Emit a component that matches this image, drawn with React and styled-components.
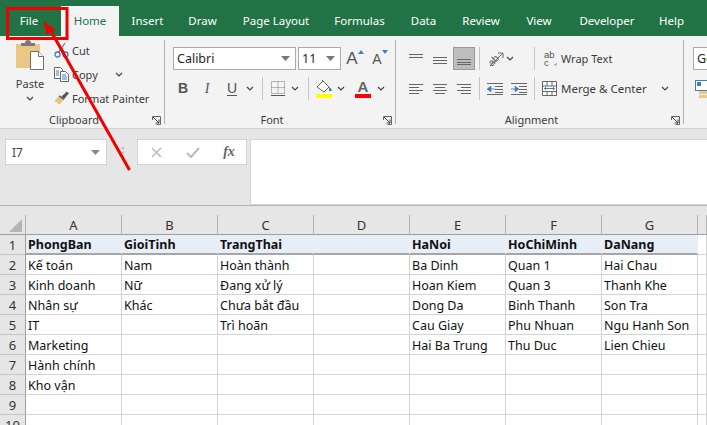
import React from 'react'
import styled, { createGlobalStyle } from 'styled-components'

const GlobalStyle = createGlobalStyle`
  html, body { margin: 0; padding: 0; background: #e6e6e6; overflow: hidden; }
  body { font-family: "Noto Sans", "Open Sans", sans-serif; }
`

const tabs = [
  ['Insert', 57],
  ['Draw', 53],
  ['Page Layout', 94],
  ['Formulas', 73],
  ['Data', 55],
  ['Review', 60],
  ['View', 56],
  ['Developer', 80],
  ['Help', 49],
]
const columns = ['A', 'B', 'C', 'D', 'E', 'F', 'G']
const sheet = [
  ['PhongBan', 'GioiTinh', 'TrangThai', '', 'HaNoi', 'HoChiMinh', 'DaNang'],
  ['Kế toán', 'Nam', 'Hoàn thành', '', 'Ba Dinh', 'Quan 1', 'Hai Chau'],
  ['Kinh doanh', 'Nữ', 'Đang xử lý', '', 'Hoan Kiem', 'Quan 3', 'Thanh Khe'],
  ['Nhân sự', 'Khác', 'Chưa bắt đầu', '', 'Dong Da', 'Binh Thanh', 'Son Tra'],
  ['IT', '', 'Trì hoãn', '', 'Cau Giay', 'Phu Nhuan', 'Ngu Hanh Son'],
  ['Marketing', '', '', '', 'Hai Ba Trung', 'Thu Duc', 'Lien Chieu'],
  ['Hành chính', '', '', '', '', '', ''],
  ['Kho vận', '', '', '', '', '', ''],
  ['', '', '', '', '', '', ''],
  ['', '', '', '', '', '', ''],
]

const Page = styled.div`
  position: relative;
  width: 707px;
  height: 425px;
  overflow: hidden;
  background: #e6e6e6;
`

const TitleBar = styled.div`
  display: flex;
  align-items: flex-end;
  height: 36px;
  padding-left: 7px;
  background: #217346;
`

const Tab = styled.div`
  display: flex;
  align-items: center;
  justify-content: center;
  flex: none;
  width: ${(p) => p.$w}px;
  height: 30px;
  margin-right: ${(p) => p.$gap || 0}px;
  padding-bottom: 1px;
  box-sizing: border-box;
  font-size: 11.5px;
  white-space: nowrap;
  color: ${(p) => (p.$active ? '#217346' : '#ffffff')};
  background: ${(p) => (p.$active ? '#f3f3f3' : 'transparent')};
`

const Ribbon = styled.div`
  display: flex;
  height: 93px;
  box-sizing: border-box;
  background: #f3f3f3;
  border-bottom: 1px solid #d2d2d2;
`

const Group = styled.div`
  display: flex;
  flex-direction: column;
  width: ${(p) => p.$w}px;
  flex: none;
  box-sizing: border-box;
  margin: 4px 0;
  height: 84px;
  border-right: ${(p) => (p.$last ? 'none' : '1px solid #b1b1b1')};
`

const GroupBody = styled.div`
  flex: 1;
  display: flex;
  padding: ${(p) => p.$pt ?? 7}px 0 0 ${(p) => p.$pl || 0}px;
  min-height: 0;
`

const GroupFooter = styled.div`
  display: flex;
  align-items: center;
  height: 16px;
  margin-bottom: -4px;
`

const GroupLabel = styled.div`
  flex: 1;
  text-align: center;
  font-size: 11px;
  line-height: 16px;
  color: #3b3b3b;
`

const Launcher = styled.div`
  width: 16px;
  display: flex;
  justify-content: center;
`

const Column = styled.div`
  display: flex;
  flex-direction: column;
  gap: ${(p) => p.$gap || 0}px;
`

const ClipboardList = styled(Column)`
  margin-top: -2px;
`

const Row = styled.div`
  display: flex;
  align-items: center;
  height: ${(p) => p.$h || 23}px;
`

const PasteButton = styled.div`
  width: 54px;
  padding-left: 3px;
  margin-right: -3px;
  display: flex;
  flex-direction: column;
  align-items: center;
  font-size: 11px;
  color: #3b3b3b;
  line-height: 15px;
`

const PasteLabel = styled.span`
  margin-top: 6px;
  margin-bottom: 5px;
`

const ClipboardItem = styled.div`
  display: flex;
  align-items: center;
  gap: 3px;
  height: 24px;
  font-size: 11px;
  color: #3b3b3b;
  white-space: nowrap;
`

const Slot = styled.div`
  display: flex;
  align-items: center;
  justify-content: center;
  flex: none;
  width: ${(p) => p.$w}px;
  margin-left: ${(p) => p.$ml || 0}px;
`

const Sep = styled.div`
  flex: none;
  width: 1px;
  align-self: stretch;
  margin-left: ${(p) => p.$ml || 0}px;
  background: #c6c6c6;
`

const ComboBox = styled.div`
  display: flex;
  align-items: center;
  justify-content: space-between;
  box-sizing: border-box;
  flex: none;
  width: ${(p) => p.$w}px;
  height: 23px;
  margin-right: ${(p) => p.$mr || 0}px;
  padding: 0 ${(p) => p.$pr || 0}px 0 3px;
  background: #fff;
  border: 1px solid #ababab;
  font-size: 12.5px;
  color: #262626;
  overflow: hidden;
  white-space: nowrap;
`

const ActiveBox = styled.div`
  display: flex;
  align-items: center;
  justify-content: center;
  flex: none;
  box-sizing: border-box;
  width: 22px;
  height: 23px;
  margin-left: 1px;
  background: #bdbdbd;
  border: 1px solid #999;
`

const ToolLabel = styled.span`
  font-size: ${(p) => p.$size || 11}px;
  color: #3b3b3b;
  white-space: nowrap;
`

const SizeButton = styled.div`
  display: flex;
  align-items: flex-start;
  justify-content: center;
  gap: 0;
  height: 18px;
`

const SizeLetter = styled.span`
  font-family: "Liberation Sans", sans-serif;
  font-size: ${(p) => p.$size}px;
  line-height: 18px;
  color: #555;
`

const StyleLetter = styled.span`
  font-family: ${(p) => (p.$italic ? '"Liberation Serif", serif' : '"Liberation Sans", sans-serif')};
  font-size: 14px;
  font-weight: ${(p) => (p.$bold ? 700 : 400)};
  font-style: ${(p) => (p.$italic ? 'italic' : 'normal')};
  color: #555;
  border-bottom: ${(p) => (p.$under ? '1.500px solid #555' : 'none')};
  line-height: 13px;
`

const ColorButton = styled.div`
  display: flex;
  flex-direction: column;
  align-items: center;
  width: 16px;
`

const ColorLetter = styled.span`
  font-family: "Liberation Sans", sans-serif;
  font-size: 15px;
  font-weight: 700;
  line-height: 14px;
  color: #666;
`

const ColorBar = styled.div`
  width: 16px;
  height: 4px;
  background: #ff0000;
`

const WrapGlyph = styled.div`
  display: flex;
  align-items: flex-end;
  width: 13px;
  height: 16px;
`

const WrapLetters = styled.span`
  font-family: "Liberation Sans", sans-serif;
  font-size: 9.500px;
  line-height: 8px;
  color: #555;
  width: 10px;
  flex: none;
`

const FormulaBar = styled.div`
  display: flex;
  height: 66px;
  margin-top: 10px;
  box-sizing: border-box;
  padding-left: 5px;
`

const NameBox = styled.div`
  display: flex;
  align-items: center;
  justify-content: space-between;
  box-sizing: border-box;
  width: 102px;
  height: 26px;
  padding: 0 6px;
  background: #fff;
  border: 1px solid #d4d4d4;
  font-size: 12px;
  color: #444;
`

const Grip = styled.div`
  width: 30px;
  height: 26px;
  display: flex;
  align-items: center;
  justify-content: center;
`

const FxBox = styled.div`
  display: flex;
  align-items: center;
  box-sizing: border-box;
  width: 110px;
  height: 26px;
  background: #fff;
  border: 1px solid #d4d4d4;
`

const FxGlyph = styled.span`
  font-family: "Liberation Serif", serif;
  font-style: italic;
  font-weight: 700;
  font-size: 14px;
  color: #666;
`

const FormulaInput = styled.div`
  flex: 1;
  margin-left: 3px;
  background: #fff;
  border: 1px solid #d4d4d4;
  border-right: none;
`

const Divider = styled.div`
  height: 1px;
  background: #b5b5b5;
`

const Grid = styled.div`
  display: grid;
  grid-template-columns: 26px repeat(7, 96px) 1fr;
  grid-auto-rows: 20px;
  margin-top: 9px;
`

const Corner = styled.div`
  display: flex;
  align-items: flex-end;
  justify-content: flex-end;
  padding: 0 3px 2px 0;
  box-sizing: border-box;
  border-right: 1px solid #b5b5b5;
  border-bottom: 1px solid #9e9e9e;
`

const ColHead = styled.div`
  display: flex;
  align-items: center;
  justify-content: center;
  box-sizing: border-box;
  background: #e6e6e6;
  border-right: 1px solid #b5b5b5;
  border-bottom: 1px solid #9e9e9e;
  font-size: 13px;
  color: #333;
`

const RowHead = styled(ColHead)`
  border-right: 1px solid #9e9e9e;
  border-bottom: 1px solid #c6c6c6;
`

const Cell = styled.div`
  display: flex;
  align-items: center;
  box-sizing: border-box;
  padding: 1px 0 0 2px;
  background: ${(p) => (p.$head ? '#e7eef7' : '#fff')};
  border-right: 1px solid ${(p) => (p.$head ? '#e7eef7' : '#d4d4d4')};
  border-bottom: ${(p) => (p.$head ? '2px solid #a6a6a6' : '1px solid #d4d4d4')};
  font-size: 12.5px;
  font-weight: ${(p) => (p.$head ? 700 : 400)};
  color: #111;
  white-space: nowrap;
`

const Callout = styled.svg`
  position: absolute;
  left: 0;
  top: 0;
  pointer-events: none;
`

const Chevron = () => (
  <svg width="8" height="5" viewBox="0 0 8 5"><path d="M1 1l3 3 3-3" fill="none" stroke="#444" strokeWidth="1.2" /></svg>
)

const Caret = ({ color = '#777' }) => (
  <svg width="9" height="5" viewBox="0 0 9 5"><path d="M0 0h9L4.5 5z" fill={color} /></svg>
)

const LauncherIcon = () => (
  <svg width="9" height="9" viewBox="0 0 9 9">
    <path d="M.5 4V.5h8v8H4.500" fill="none" stroke="#666" />
    <path d="M1 1l6 6M7 3.500V7H3.500" fill="none" stroke="#444" />
  </svg>
)

const PasteIcon = () => (
  <svg width="28" height="30" viewBox="0 0 28 30">
    <rect x="0" y="4" width="24" height="24" rx="1" fill="#eac785" />
    <path d="M5 6V3h4a3 3 0 0 1 6 0h4v3z" fill="#7a7a7a" />
    <path d="M14.500 11.500h8l5 5v13h-13z" fill="#fff" stroke="#6f6f6f" />
    <path d="M22.500 11.500v5h5" fill="#fff" stroke="#6f6f6f" />
  </svg>
)

const CutIcon = () => (
  <svg width="15" height="16" viewBox="0 0 15 16">
    <circle cx="3.500" cy="12.500" r="2.500" fill="none" stroke="#3f7fc0" strokeWidth="1.300" />
    <circle cx="11.500" cy="12.500" r="2.500" fill="none" stroke="#3f7fc0" strokeWidth="1.300" />
    <path d="M4.500 10.500L11 1M10.500 10.500L4 1" stroke="#6d6d6d" strokeWidth="1.200" />
  </svg>
)

const CopyIcon = () => (
  <svg width="15" height="15" viewBox="0 0 15 15">
    <path d="M.5.5h6l2 2v9h-8z" fill="#fff" stroke="#666" />
    <path d="M6.500 4.500h5l3 3v7h-8z" fill="#fff" stroke="#666" />
    <path d="M2 4h3M2 6h3M2 8h3M8 8h4M8 10h5M8 12h5" stroke="#3f7fc0" />
  </svg>
)

const PainterIcon = () => (
  <svg width="16" height="14" viewBox="0 0 16 14">
    <path d="M1 9l4-4 5 4-4 5-2-1-1-2-1 1z" fill="#e9c27d" />
    <path d="M5 5l5 4 1-1-5-4zM8 5l4-3 1-2 3 2-2 2-3 4z" fill="#555" />
  </svg>
)

const SizeArrow = ({ up }) => (
  <svg width="6" height="4" viewBox="0 0 6 4">
    <path d={up ? 'M0 4l3-4 3 4z' : 'M0 0h6L3 4z'} fill="#3f7fc0" />
  </svg>
)

const BordersIcon = () => (
  <svg width="14" height="15" viewBox="0 0 14 15">
    <path d="M.5.500h13v12h-13zM7 .500v12M.5 6.500h13" fill="none" stroke="#777" strokeDasharray="1 1" />
    <path d="M0 14.500h14" stroke="#555" />
  </svg>
)

const FillIcon = () => (
  <svg width="17" height="19" viewBox="0 0 17 19">
    <path d="M1 8l6-6 6 6-5 5z" fill="#fff" stroke="#666" />
    <path d="M6 1l2 2" stroke="#666" />
    <path d="M13 8c2 1 3 3 3 4h-3z" fill="#3f7fc0" />
    <rect y="15" width="16" height="4" fill="#ffff00" />
  </svg>
)

const Lines = ({ rows, w = 14 }) => (
  <svg width={w} height="12" viewBox={`0 0 ${w} 12`}>
    {rows.map(([x1, x2, y]) => (
      <path key={y} d={`M${x1} ${y}.5H${x2}`} stroke="#666" />
    ))}
  </svg>
)

const OrientIcon = () => (
  <svg width="17" height="16" viewBox="0 0 17 16">
    <text x="0" y="12" transform="rotate(-45 7 8)" fontFamily="Liberation Sans, sans-serif" fontSize="10" fill="#555">ab</text>
    <path d="M3 15L15 3M11 2h5v5" fill="none" stroke="#666" />
  </svg>
)

const IndentIcon = ({ flip }) => (
  <svg width="16" height="12" viewBox="0 0 16 12">
    <path d="M0 .5h16M8 3.500h8M8 6.500h8M8 9.500h8M0 11.500h16" stroke="#666" />
    <path d={flip ? 'M0 6h4V3l4 3-4 3V6z' : 'M8 6H4V3L0 6l4 3V6z'} fill="#3f7fc0" stroke="#3f7fc0" strokeWidth=".5" />
  </svg>
)

const MergeIcon = () => (
  <svg width="15" height="15" viewBox="0 0 15 15">
    <path d="M.5.500h14v14H.5zM.5 5h14M.5 10.500h14M5 .5V5M10 .5V5M5 10.500v4M10 10.500v4" fill="#fff" stroke="#666" />
    <path d="M2.500 7.500h10M4 6L2.500 7.500 4 9M11 6l1.500 1.500L11 9" fill="none" stroke="#3f7fc0" />
  </svg>
)

const FormatIcon = () => (
  <svg width="14" height="18" viewBox="0 0 14 18">
    <rect x=".5" y=".5" width="13" height="10" fill="#fff" stroke="#3f7fc0" />
    <rect x="2" y="2" width="4" height="4" fill="#3f7fc0" />
    <rect x="4" y="11" width="10" height="3" fill="#eac785" />
    <rect x="4" y="15" width="10" height="3" fill="#eac785" />
  </svg>
)

function ClipboardGroup() {
  return (
    <Group $w={165}>
      <GroupBody $pt={0}>
        <PasteButton>
          <PasteIcon />
          <PasteLabel>Paste</PasteLabel>
          <Chevron />
        </PasteButton>
        <ClipboardList>
          <ClipboardItem>
            <Slot $w={15}><CutIcon /></Slot>
            Cut
          </ClipboardItem>
          <ClipboardItem>
            <Slot $w={15}><CopyIcon /></Slot>
            Copy
            <Slot $w={8} $ml={14}><Chevron /></Slot>
          </ClipboardItem>
          <ClipboardItem>
            <Slot $w={15}><PainterIcon /></Slot>
            Format Painter
          </ClipboardItem>
        </ClipboardList>
      </GroupBody>
      <GroupFooter>
        <GroupLabel>Clipboard</GroupLabel>
        <Launcher><LauncherIcon /></Launcher>
      </GroupFooter>
    </Group>
  )
}

function FontGroup() {
  return (
    <Group $w={231}>
      <GroupBody $pl={8}>
        <Column $gap={7}>
          <Row>
            <ComboBox $w={123} $mr={2} $pr={5}>Calibri<Caret /></ComboBox>
            <ComboBox $w={43} $pr={5}>11<Caret /></ComboBox>
            <Slot $w={26} $ml={1}>
              <SizeButton><SizeLetter $size={17}>A</SizeLetter><SizeArrow up /></SizeButton>
            </Slot>
            <Slot $w={24}>
              <SizeButton><SizeLetter $size={14}>A</SizeLetter><SizeArrow /></SizeButton>
            </Slot>
          </Row>
          <Row>
            <Slot $w={20}><StyleLetter $bold>B</StyleLetter></Slot>
            <Slot $w={20} $ml={4}><StyleLetter $italic>I</StyleLetter></Slot>
            <Slot $w={20} $ml={5}><StyleLetter $under>U</StyleLetter></Slot>
            <Slot $w={10} $ml={3}><Chevron /></Slot>
            <Sep $ml={7} />
            <Slot $w={29}><BordersIcon /></Slot>
            <Slot $w={10} $ml={-2}><Chevron /></Slot>
            <Sep $ml={8} />
            <Slot $w={30}><FillIcon /></Slot>
            <Slot $w={10} $ml={-3}><Chevron /></Slot>
            <Slot $w={34}>
              <ColorButton><ColorLetter>A</ColorLetter><ColorBar /></ColorButton>
            </Slot>
            <Slot $w={10} $ml={-4}><Chevron /></Slot>
          </Row>
        </Column>
      </GroupBody>
      <GroupFooter>
        <GroupLabel>Font</GroupLabel>
        <Launcher><LauncherIcon /></Launcher>
      </GroupFooter>
    </Group>
  )
}

function AlignmentGroup() {
  return (
    <Group $w={288}>
      <GroupBody $pl={8}>
        <Column $gap={7}>
          <Row>
            <Slot $w={24}><Lines rows={[[0, 14, 1], [0, 14, 4]]} /></Slot>
            <Slot $w={24}><Lines rows={[[0, 14, 4], [0, 14, 7], [0, 14, 10]]} /></Slot>
            <ActiveBox><Lines rows={[[0, 14, 6], [0, 14, 9], [0, 14, 11]]} /></ActiveBox>
            <Sep $ml={4} />
            <Slot $w={24} $ml={3}><OrientIcon /></Slot>
            <Slot $w={8} $ml={-1}><Chevron /></Slot>
            <Sep $ml={20} />
            <Slot $w={13} $ml={9}>
              <WrapGlyph>
                <WrapLetters>ab c</WrapLetters>
                <svg width="5" height="5" viewBox="0 0 5 5">
                  <path d="M4.500 0v3H1M2.500 1.500L1 3l1.500 1.500" fill="none" stroke="#3f7fc0" />
                </svg>
              </WrapGlyph>
            </Slot>
            <Slot $w={4} />
            <ToolLabel>Wrap Text</ToolLabel>
          </Row>
          <Row>
            <Slot $w={24}><Lines rows={[[0, 14, 1], [0, 10, 4], [0, 14, 7], [0, 10, 10]]} /></Slot>
            <Slot $w={24}><Lines rows={[[0, 14, 1], [2, 12, 4], [0, 14, 7], [2, 12, 10]]} /></Slot>
            <Slot $w={24}><Lines rows={[[0, 14, 1], [4, 14, 4], [0, 14, 7], [4, 14, 10]]} /></Slot>
            <Sep $ml={3} />
            <Slot $w={16} $ml={7}><IndentIcon /></Slot>
            <Slot $w={16} $ml={8}><IndentIcon flip /></Slot>
            <Sep $ml={7} />
            <Slot $w={15} $ml={7}><MergeIcon /></Slot>
            <Slot $w={4} />
            <ToolLabel $size={11.5}>Merge &amp; Center</ToolLabel>
            <Slot $w={8} $ml={14}><Chevron /></Slot>
          </Row>
        </Column>
      </GroupBody>
      <GroupFooter>
        <GroupLabel>Alignment</GroupLabel>
        <Launcher><LauncherIcon /></Launcher>
      </GroupFooter>
    </Group>
  )
}

function NumberGroup() {
  return (
    <Group $w={23} $last>
      <GroupBody $pl={9}>
        <Column $gap={7}>
          <ComboBox $w={40}>General</ComboBox>
          <Row><Slot $w={14} $ml={2}><FormatIcon /></Slot></Row>
        </Column>
      </GroupBody>
    </Group>
  )
}

export default function App() {
  return (
    <Page>
      <GlobalStyle />
      <TitleBar>
        <Tab $w={44} $gap={10}>File</Tab>
        <Tab $w={58} $active>Home</Tab>
        {tabs.map(([t, w]) => (
          <Tab key={t} $w={w}>{t}</Tab>
        ))}
      </TitleBar>
      <Ribbon>
        <ClipboardGroup />
        <FontGroup />
        <AlignmentGroup />
        <NumberGroup />
      </Ribbon>
      <FormulaBar>
        <NameBox>
          I7
          <Caret color="#888" />
        </NameBox>
        <Grip>
          <svg width="3" height="11" viewBox="0 0 3 11">
            <path d="M1 0h2v2H1zM1 4.500h2v2H1zM1 9h2v2H1z" fill="#bdbdbd" />
          </svg>
        </Grip>
        <FxBox>
          <Slot $w={37}>
            <svg width="11" height="11" viewBox="0 0 11 11"><path d="M1 1l9 9M10 1l-9 9" stroke="#bbb" strokeWidth="1.500" /></svg>
          </Slot>
          <Slot $w={36}>
            <svg width="14" height="11" viewBox="0 0 14 11"><path d="M1 6l4 4 8-9" fill="none" stroke="#bbb" strokeWidth="2" /></svg>
          </Slot>
          <Slot $w={36}><FxGlyph>fx</FxGlyph></Slot>
        </FxBox>
        <FormulaInput />
      </FormulaBar>
      <Divider />
      <Grid>
        <Corner>
          <svg width="13" height="13" viewBox="0 0 13 13"><path d="M13 0v13H0z" fill="#b5b5b5" /></svg>
        </Corner>
        {columns.map((c) => (
          <ColHead key={c}>{c}</ColHead>
        ))}
        <ColHead />
        {sheet.map((row, r) => (
          <React.Fragment key={r}>
            <RowHead>{r + 1}</RowHead>
            {row.map((v, c) => (
              <Cell key={c} $head={r === 0}>{v}</Cell>
            ))}
            <Cell />
          </React.Fragment>
        ))}
      </Grid>
      <Callout width="707" height="425" viewBox="0 0 707 425">
        <rect x="7.500" y="8.500" width="59.500" height="30" fill="none" stroke="#f00000" strokeWidth="3" />
        <path d="M129.500 170L52 33" stroke="#f00000" strokeWidth="3" fill="none" />
        <path d="M44 22L55 30 47 34z" fill="#f00000" stroke="#f00000" />
      </Callout>
    </Page>
  )
}
